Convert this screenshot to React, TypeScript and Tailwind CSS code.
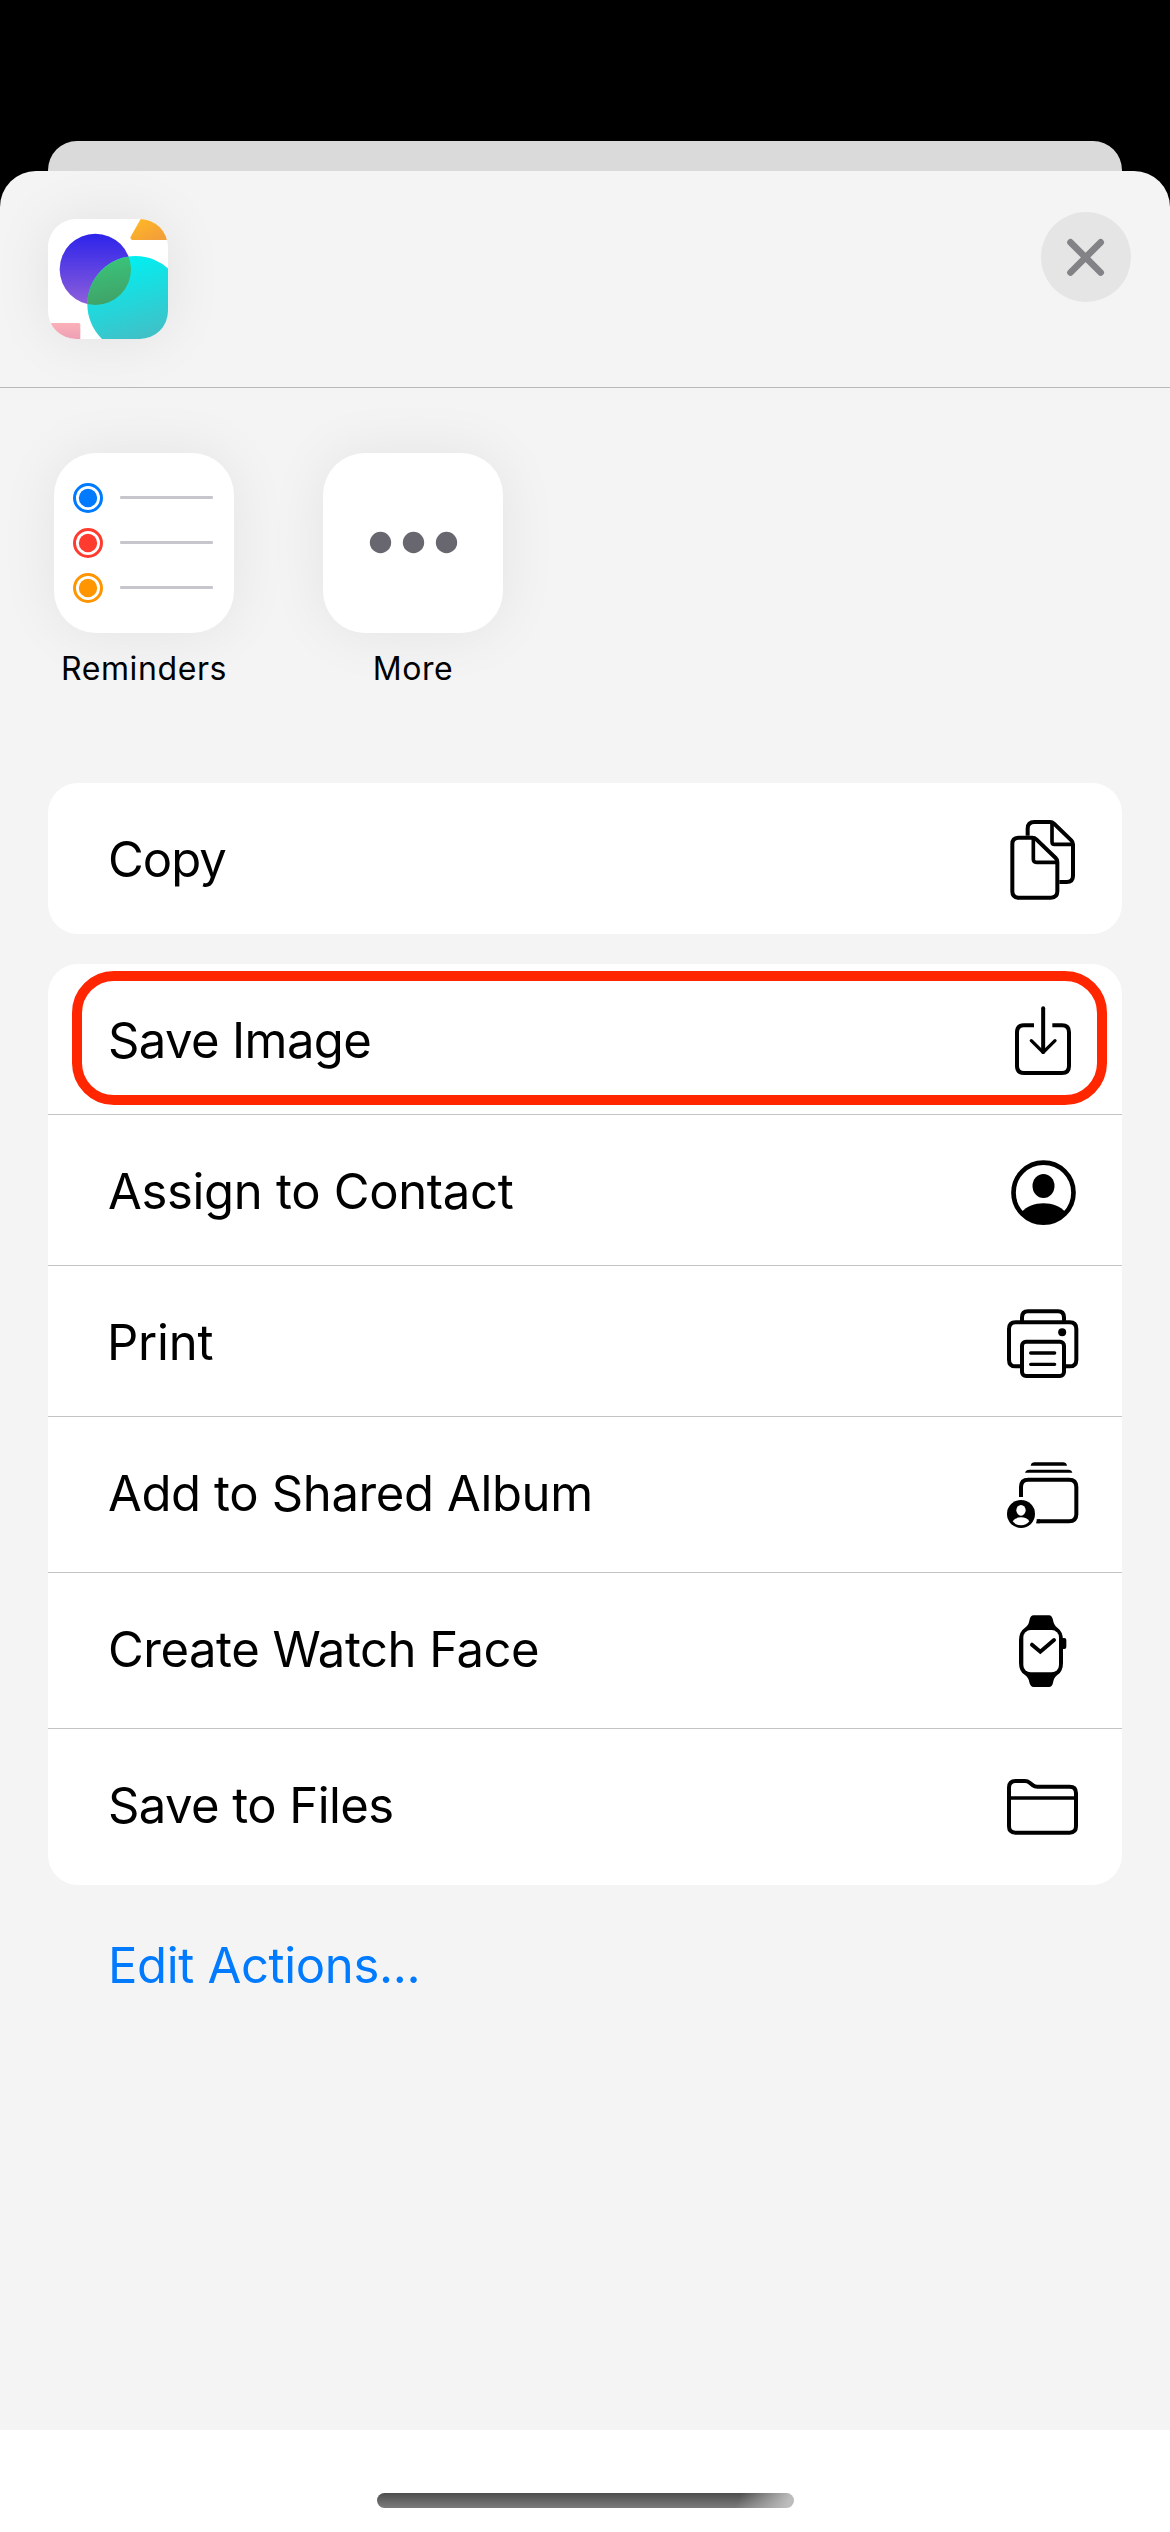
import type { ReactNode } from "react";

type Action = {
  label: string;
  text: string;
  row: string;
  viewBox: string;
  icon: ReactNode;
};

const stroke = { fill: "none", stroke: "#000", strokeWidth: 12 } as const;

const copyAction: Action = {
  label: "Copy",
  text: "tracking-[-1px] pt-[2px]",
  row: "h-[151px]",
  viewBox: "129 39 240 453",
  icon: (
    <g {...stroke}>
      <path d="M157 222Q157 203 176 203H217Q224 203 229 208L287 264Q292 269 292 276V364Q292 383 273 383H176Q157 383 157 364Z" />
      <path d="M220 203V268Q220 277 229 277H292" strokeWidth={11} />
      <path d="M203 197V176Q203 156 223 156H270Q277 156 282 161L334 211Q339 216 339 223V317Q339 336 320 336H298" />
      <path d="M276 156V215Q276 223 284 223H339" strokeWidth={11} />
    </g>
  ),
};

const actions: Action[] = [
  {
    label: "Save Image",
    text: "tracking-[-0.62px] pt-[4px]",
    row: "h-[151px] border-b",
    viewBox: "129 582 240 450",
    icon: (
      <g {...stroke}>
        <path d="M222 766H192Q171 766 171 787V888Q171 909 192 909H306Q327 909 327 888V787Q327 766 306 766H277" />
        <path d="M249.500 715V846" strokeLinecap="round" />
        <path d="M214 812L249.500 847L285 812" strokeLinecap="round" strokeLinejoin="round" strokeWidth={10} />
      </g>
    ),
  },
  {
    label: "Assign to Contact",
    text: "tracking-[-0.32px] pt-[4px]",
    row: "h-[151px] border-b",
    viewBox: "129 -45 240 450",
    icon: (
      <>
        <circle cx="250.500" cy="188" r="90" {...stroke} strokeWidth={14} />
        <ellipse cx="250.500" cy="168" rx="33" ry="36" />
        <path d="M184 247C200 229 224 220 250.500 220S301 229 317 247A90 90 0 0 1 184 247Z" />
      </>
    ),
  },
  {
    label: "Print",
    text: "tracking-[-0.2px] pt-[4px] -ml-px",
    row: "h-[151px] border-b",
    viewBox: "129 408 240 450",
    icon: (
      <>
        <g {...stroke}>
          <path d="M182 709H167Q147 709 147 689V597Q147 577 167 577H329Q349 577 349 597V689Q349 709 329 709H316" />
          <path d="M186 577V563Q186 544 204 544H294Q312 544 312 563V577" />
          <rect x="186" y="635" width="126" height="103" rx="12" />
          <path d="M212 669H284M212 703H284" strokeWidth={10} strokeLinecap="round" />
        </g>
        <circle cx="306.500" cy="607" r="12" />
      </>
    ),
  },
  {
    label: "Add to Shared Album",
    text: "tracking-[-0.37px] pb-[1px]",
    row: "h-[156px] border-b",
    viewBox: "129 21 240 465",
    icon: (
      <>
        <path d="M183 261V231Q183 209 205 209H327Q349 209 349 231V313Q349 334 327 334H230" {...stroke} />
        <path d="M212 167Q214 157 224 157H309Q319 157 321 167ZM195 188Q198 179 208 179H325Q335 179 337 188Z" />
        <path d="M228 340L233 328H240V340Z" />
        <circle cx="183" cy="312" r="42" />
        <ellipse cx="183" cy="301" rx="14" ry="16" fill="#fff" />
        <path d="M158 334Q165 322 183 322T208 334Q199 346 183 346T158 334Z" fill="#fff" />
      </>
    ),
  },
  {
    label: "Create Watch Face",
    text: "tracking-[-0.48px] pb-[2px]",
    row: "h-[156px] border-b",
    viewBox: "129 489 240 465",
    icon: (
      <>
        <path d="M177 690Q177 665 195 653Q206 645 208 632Q211 616 221 616H267Q276 616 279 630Q281 645 292 653Q309 665 309 690V758Q309 785 292 795Q281 803 279 818Q276 831 267 831H221Q211 831 208 817Q206 803 195 795Q177 785 177 758Z" />
        <rect x="190" y="660" width="107" height="127" rx="22" fill="#fff" />
        <rect x="303" y="684" width="16" height="33" rx="6" />
        <path d="M216 704L241 725L282 690" {...stroke} strokeLinecap="round" />
      </>
    ),
  },
  {
    label: "Save to Files",
    text: "tracking-[-0.57px] pb-[2px]",
    row: "h-[156px]",
    viewBox: "129 117 240 468",
    icon: (
      <g {...stroke}>
        <path d="M147 293Q147 273 167 273H195Q203 273 209 278L219 286Q224 290 232 290H329Q348 290 348 309V409Q348 428 329 428H166Q147 428 147 409Z" />
        <path d="M147 324H348" strokeWidth={11} />
      </g>
    ),
  },
];

function ActionRow({ label, text, row, viewBox, icon }: Action) {
  return (
    <li className={`flex items-center justify-between border-[#c4c4c4] pl-[60px] pr-[39px] ${row}`}>
      <span className={`text-[49px] leading-[60px] ${text}`}>{label}</span>
      <svg className="h-full w-20" viewBox={viewBox}>
        {icon}
      </svg>
    </li>
  );
}

function AppIcon() {
  return (
    <svg className="size-[120px] rounded-[28px] bg-white shadow-[0_0_60px_rgba(0,0,0,0.08)]" viewBox="144 297 360 360">
      <defs>
        <linearGradient id="violet" x1="0" y1="0" x2="0" y2="1">
          <stop offset="0" stopColor="#2c23ea" />
          <stop offset="1" stopColor="#8f60da" />
        </linearGradient>
        <linearGradient id="cyan" x1="0.4" y1="0" x2="0.65" y2="0.8">
          <stop offset="0" stopColor="#00f0f2" />
          <stop offset="1" stopColor="#3ec2c8" />
        </linearGradient>
        <linearGradient id="green" x1="0" y1="0" x2="0.2" y2="1">
          <stop offset="0" stopColor="#39c97c" />
          <stop offset="1" stopColor="#40a268" />
        </linearGradient>
        <linearGradient id="amber" x1="0.4" y1="0" x2="1" y2="0.6">
          <stop offset="0" stopColor="#fdb528" />
          <stop offset="1" stopColor="#f4a038" />
        </linearGradient>
        <linearGradient id="pink" x1="0" y1="0" x2="0" y2="1">
          <stop offset="0" stopColor="#fbb1b7" />
          <stop offset="1" stopColor="#ee9fb6" />
        </linearGradient>
        <clipPath id="violet-clip">
          <circle cx="286" cy="448" r="107" />
        </clipPath>
      </defs>
      <circle cx="286" cy="448" r="107" fill="url(#violet)" />
      <circle cx="407" cy="553" r="145" fill="url(#cyan)" />
      <g clipPath="url(#violet-clip)">
        <path d="M262 553A145 145 0 0 1 407 408V560H262Z" fill="url(#green)" />
      </g>
      <path d="M422 297H430Q491 305 501 360H397Q389 357 392 350Z" fill="url(#amber)" />
      <path d="M144 609H236Q241 609 241 614V657H144Z" fill="url(#pink)" />
    </svg>
  );
}

const tile = "size-[180px] rounded-[42px] bg-white shadow-[0_0_60px_rgba(0,0,0,0.07)]";

function ShareTarget({ label, viewBox, children }: { label: string; viewBox: string; children: ReactNode }) {
  return (
    <div className="flex w-[180px] flex-col items-center">
      <svg className={tile} viewBox={viewBox}>
        {children}
      </svg>
      <span className="mt-4 text-[32px] leading-10 tracking-[0.6px]">{label}</span>
    </div>
  );
}

const reminderDots = [
  { y: 204, color: "#007aff" },
  { y: 339, color: "#ff3b30" },
  { y: 474, color: "#ff9500" },
];

export default function App() {
  return (
    <main className="flex h-[2532px] w-[1170px] flex-col bg-black pt-[141px] font-['Inter',sans-serif] text-black">
      <div className="mx-12 h-[30px] shrink-0 rounded-t-[29px] bg-[#dadada]" />
      <section className="flex grow flex-col rounded-t-[36px] bg-[#f4f4f4]">
        <header className="flex h-[217px] shrink-0 items-start justify-between border-b border-[#b9b9b9] pl-12 pr-[39px]">
          <div className="pt-12">
            <AppIcon />
          </div>
          <button className="mt-[41px] size-[90px] rounded-full bg-[#e5e5e5]" aria-label="Close">
            <svg viewBox="573 276 270 270">
              <path d="M661.500 367L752 457.500M752 367L661.500 457.500" stroke="#838287" strokeWidth="20" strokeLinecap="round" />
            </svg>
          </button>
        </header>

        <div className="flex gap-[89px] pl-[54px] pt-[65px]">
          <ShareTarget label="Reminders" viewBox="72 69 540 540">
            {reminderDots.map(({ y, color }) => (
              <g key={y}>
                <circle cx="174" cy={y} r="40.500" fill="none" stroke={color} strokeWidth="9" />
                <circle cx="174" cy={y} r="27.500" fill={color} />
                <rect x="270" y={y - 6} width="279" height="9" rx="4" fill="#c7c6cc" />
              </g>
            ))}
          </ShareTarget>
          <ShareTarget label="More" viewBox="879 69 540 540">
            <g fill="#68676f">
              <circle cx="1051.500" cy="337.500" r="32" />
              <circle cx="1150.500" cy="337.500" r="32" />
              <circle cx="1249.500" cy="337.500" r="32" />
            </g>
          </ShareTarget>
        </div>

        <ul className="mx-12 mt-[94px] rounded-[30px] bg-white">
          <ActionRow {...copyAction} />
        </ul>

        <div className="relative mx-12 mt-[30px]">
          <ul className="rounded-[30px] bg-white">
            {actions.map((action) => (
              <ActionRow key={action.label} {...action} />
            ))}
          </ul>
          <div className="absolute left-[24px] top-[7px] h-[134px] w-[1035px] rounded-[42px] border-[10px] border-[#ff2600]" />
        </div>

        <a className="ml-[108px] mt-[51px] text-[49px] leading-[60px] tracking-[-0.34px] text-[#007aff]">
          Edit Actions...
        </a>
      </section>
      <footer className="flex h-[102px] shrink-0 justify-center bg-white pt-[63px]">
        <div className="h-[15px] w-[417px] rounded-full bg-[linear-gradient(115deg,transparent_86%,#bcbcbc_98%),linear-gradient(#4e4e4e,#7c7c7c)]" />
      </footer>
    </main>
  );
}
